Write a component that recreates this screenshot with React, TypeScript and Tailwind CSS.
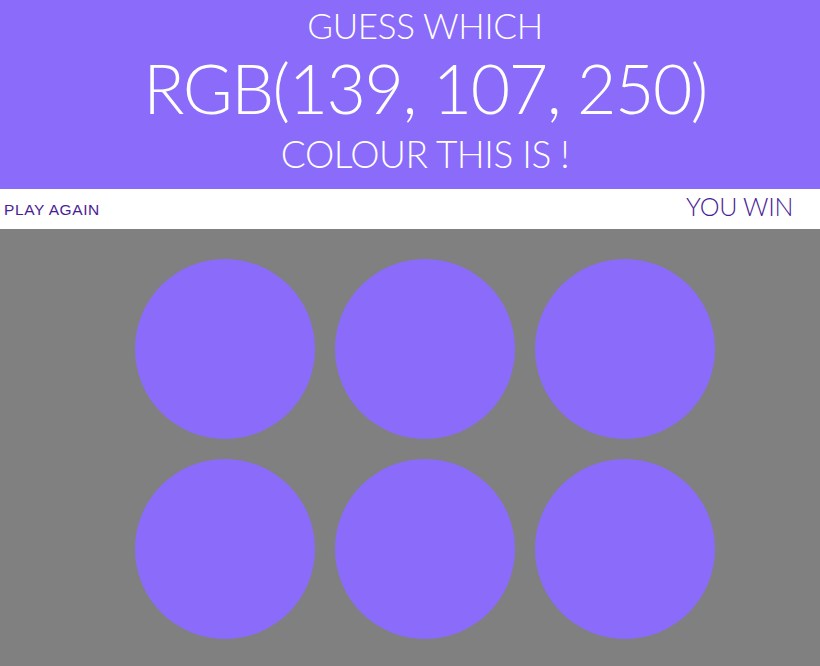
import React from 'react';

const colour = 'rgb(139, 107, 250)';

// six swatches, all the same colour once the game is won
const circles = [0, 1, 2, 3, 4, 5];

export default function App() {
  return (
    <div className="min-h-[666px] bg-[#808080] font-['Lato',sans-serif]">
      <header className="bg-[#8b6bfa] text-white text-center font-light uppercase pt-[4px] pl-[30px] h-[189px]">
        <h3 className="text-[35px] leading-[42px] tracking-[-0.3px]">Guess which</h3>
        <h1 className="text-[68px] leading-[84px] tracking-[-1.5px]">{colour}</h1>
        <h3 className="text-[37px] leading-[44px] tracking-[-0.5px] pt-[2px]">Colour this is !</h3>
      </header>

      <div className="bg-white h-[40px] flex items-center justify-between pl-[4px] pr-[27px] text-[#4a1d96]">
        <button className="font-['Liberation_Sans',sans-serif] text-[15.5px] tracking-[0.6px] uppercase pt-[2px]">
          Play again
        </button>
        <span className="text-[25px] font-light uppercase pb-[4px] tracking-[-0.3px]">You win</span>
      </div>

      <div className="flex justify-center pl-[30px] pt-[20px]">
        <div className="grid grid-cols-3 w-[600px]">
          {circles.map((i) => (
            <div key={i} className="p-[10px]">
              <div className="w-[180px] h-[180px] rounded-full bg-[#8b6bfa]" />
            </div>
          ))}
        </div>
      </div>
    </div>
  );
}
